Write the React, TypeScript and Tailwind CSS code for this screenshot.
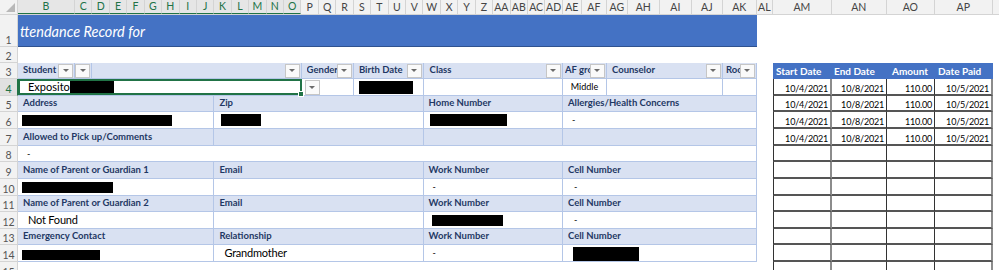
import type { ReactNode } from 'react'

const NARROW = 'w-[17.43px]'

type Col = { label: string; w: string; sel?: boolean }

const columns: Col[] = [
  { label: 'B', w: 'w-[57px]', sel: true },
  ...'C D E F G H I J K L M N O'.split(' ').map((l) => ({ label: l, w: NARROW, sel: true })),
  ...'P Q R S T U V W X Y Z AA AB AC AD'.split(' ').map((l) => ({ label: l, w: NARROW })),
  { label: 'AE', w: 'w-[19px]' },
  { label: 'AF', w: 'w-[25px]' },
  { label: 'AG', w: 'w-[21px]' },
  { label: 'AH', w: 'w-[32px]' },
  { label: 'AI', w: 'w-[32px]' },
  { label: 'AJ', w: 'w-[31px]' },
  { label: 'AK', w: 'w-[34px]' },
  { label: 'AL', w: 'w-[16px]' },
  { label: 'AM', w: 'w-[59px]' },
  { label: 'AN', w: 'w-[55px]' },
  { label: 'AO', w: 'w-[48px]' },
  { label: 'AP', w: 'w-[58px]' },
  { label: '', w: 'w-[40px]' },
]

// 4-column form rows: Address | Zip | Home Number | Allergies
const W4 = ['w-[196.4px]', 'w-[209.2px]', 'w-[139.4px]', 'w-[194px]']

const CELL = 'flex h-full shrink-0 items-center overflow-hidden whitespace-nowrap border-r border-[#b4c6e7]'
const HEAD = 'bg-[#d9e1f2] text-[9.5px] font-bold text-[#1f3864]'

// right hand payments table
const TH = ['w-[59px] pl-[3px]', 'w-[55px] pl-[2px]', 'w-[48px] pl-[5px]', 'w-[58px] pl-[3px]']
const TD = [
  'w-[59px] border-l border-l-[#333] border-r-2 border-r-[#8c8c8c]',
  'w-[55px] border-r border-r-[#333]',
  'w-[48px] border-r border-r-[#333]',
  'w-[58px] border-r-2 border-r-[#8c8c8c]',
]
const payment = ['10/4/2021', '10/8/2021', '110.00', '10/5/2021']

function Drop({ className = '' }: { className?: string }) {
  return (
    <span
      className={`flex h-[14px] w-[15px] shrink-0 items-center justify-center border border-[#c6c6c6] bg-[#fafafa] ${className}`}
    >
      <span className="h-0 w-0 border-x-[3px] border-t-[3px] border-x-transparent border-t-[#6b6b6b]" />
    </span>
  )
}

function Redact({ className }: { className: string }) {
  return <span className={`block shrink-0 bg-black ${className}`} />
}

function RowNum({ n, sel }: { n: number; sel?: boolean }) {
  return (
    <div
      className={`flex w-[18px] shrink-0 items-end justify-center border-b border-r pb-px text-[10.5px] leading-none ${
        sel
          ? 'border-[#d4d4d4] border-r-[#217346] bg-[#e1e1e1] text-[#217346]'
          : 'border-[#d4d4d4] bg-[#f2f2f2] text-[#555]'
      }`}
    >
      {n}
    </div>
  )
}

function SheetRow({
  n,
  h,
  sel,
  formClass = 'border-b border-[#b4c6e7]',
  form,
  table,
}: {
  n: number
  h: string
  sel?: boolean
  formClass?: string
  form?: ReactNode
  table?: ReactNode
}) {
  return (
    <div className={`flex ${h}`}>
      <RowNum n={n} sel={sel} />
      <div className={`flex w-[739px] shrink-0 ${formClass}`}>{form}</div>
      <div className="w-[16px] shrink-0" />
      <div className="flex w-[220px] shrink-0">{table}</div>
    </div>
  )
}

function HeadCells({ labels }: { labels: string[] }) {
  return (
    <>
      {labels.map((l, i) => (
        <div key={i} className={`${CELL} ${HEAD} ${W4[i]} pl-[5px]`}>
          {l}
        </div>
      ))}
    </>
  )
}

function TableCells({ values }: { values?: string[] }) {
  return (
    <>
      {TD.map((c, i) => (
        <div
          key={i}
          className={`flex h-full shrink-0 items-end justify-end border-b-2 border-b-[#555] pb-px pr-[2px] text-[9px] leading-none tracking-[-0.2px] text-black ${c}`}
        >
          {values?.[i]}
        </div>
      ))}
    </>
  )
}

function Dash({ className = 'pl-[9px]' }: { className?: string }) {
  return <span className={`text-[9px] text-black ${className}`}>-</span>
}

export default function App() {
  return (
    <div className="h-[270px] w-[999px] overflow-hidden bg-white font-['Lato','Liberation_Sans',sans-serif] text-black">
      {/* column letters */}
      <div className="flex h-[15px] border-b border-[#d4d4d4] bg-[#f2f2f2]">
        <div className="relative w-[18px] shrink-0 border-r border-[#d4d4d4]">
          <span className="absolute bottom-[2px] right-[2px] h-0 w-0 border-b-[9px] border-l-[9px] border-b-[#b8b8b8] border-l-transparent" />
        </div>
        {columns.map((c, i) => (
          <div
            key={i}
            className={`flex h-full shrink-0 items-center justify-center border-r border-[#d4d4d4] text-[10.5px] leading-none ${c.w} ${
              c.sel ? 'border-b border-b-[#217346] bg-[#e6e6e6] text-[#217346]' : 'text-[#444]'
            }`}
          >
            {c.label}
          </div>
        ))}
      </div>

      <SheetRow
        n={1}
        h="h-[32px]"
        formClass=""
        form={
          <div className="flex w-full items-center border-b border-[#2f528f] bg-[#4472c4] pl-[2px] pt-[3px] text-[14.5px] italic text-white">
            ttendance Record for
          </div>
        }
      />
      <SheetRow n={2} h="h-[16px]" formClass="" />

      <SheetRow
        n={3}
        h="h-[16px]"
        form={
          <>
            <div className={`${CELL} ${HEAD} w-[57px] pl-[5px] pr-px`}>
              Student
              <Drop className="ml-auto" />
            </div>
            <div className={`${CELL} ${HEAD} ${NARROW} pr-px`}>
              <span className="w-[2px] overflow-hidden">n</span>
              <Drop className="ml-auto" />
            </div>
            <div className={`${CELL} ${HEAD} w-[209.2px] pr-px`}>
              <Drop className="ml-auto" />
            </div>
            <div className={`${CELL} ${HEAD} w-[52.3px] pl-[5px] pr-px`}>
              <span className="min-w-0 flex-1 overflow-hidden">Gender</span>
              <Drop />
            </div>
            <div className={`${CELL} ${HEAD} w-[69.7px] pl-[5px] pr-px`}>
              Birth Date
              <Drop className="ml-auto" />
            </div>
            <div className={`${CELL} ${HEAD} w-[139.4px] pl-[6px] pr-px`}>
              Class
              <Drop className="ml-auto" />
            </div>
            <div className={`${CELL} ${HEAD} w-[44px] pl-[2px] pr-px`}>
              <span className="min-w-0 flex-1 overflow-hidden">AF group</span>
              <Drop />
            </div>
            <div className={`${CELL} ${HEAD} w-[116px] pl-[5px] pr-px`}>
              Counselor
              <Drop className="ml-auto" />
            </div>
            <div className={`${CELL} ${HEAD} w-[34px] pl-[3px] pr-px`}>
              <span className="min-w-0 flex-1 overflow-hidden">Room</span>
              <Drop />
            </div>
          </>
        }
        table={
          <div className="flex h-full w-full bg-[#4472c4] text-[10px] font-bold text-white">
            {['Start Date', 'End Date', 'Amount', 'Date Paid'].map((t, i) => (
              <div key={t} className={`flex h-full shrink-0 items-center whitespace-nowrap ${TH[i]}`}>
                {t}
              </div>
            ))}
          </div>
        }
      />

      <SheetRow
        n={4}
        h="h-[17px]"
        sel
        form={
          <>
            <div className="relative flex h-full w-[283.6px] shrink-0 items-center border-2 border-[#217346] pl-[8px] text-[11px]">
              Exposito
              <Redact className="h-[12px] w-[44px]" />
              <span className="absolute -bottom-[4px] -right-[4px] h-[6px] w-[6px] border border-white bg-[#217346]" />
            </div>
            <div className={`${CELL} w-[52.3px] pl-[3px]`}>
              <Drop className="h-[15px]" />
            </div>
            <div className={`${CELL} w-[69.7px] pl-[5px]`}>
              <Redact className="h-[13px] w-[54px]" />
            </div>
            <div className={`${CELL} w-[139.4px]`} />
            <div className={`${CELL} w-[44px] justify-center text-[9px]`}>Middle</div>
            <div className={`${CELL} w-[116px]`} />
            <div className={`${CELL} w-[34px]`} />
          </>
        }
        table={<TableCells values={payment} />}
      />

      <SheetRow
        n={5}
        h="h-[16px]"
        form={<HeadCells labels={['Address', 'Zip', 'Home Number', 'Allergies/Health Concerns']} />}
        table={<TableCells values={payment} />}
      />
      <SheetRow
        n={6}
        h="h-[17px]"
        form={
          <>
            <div className={`${CELL} ${W4[0]} pl-[4px]`}>
              <Redact className="h-[11px] w-[150px]" />
            </div>
            <div className={`${CELL} ${W4[1]} pl-[7px]`}>
              <Redact className="h-[12px] w-[40px]" />
            </div>
            <div className={`${CELL} ${W4[2]} pl-[6px]`}>
              <Redact className="h-[12px] w-[77px]" />
            </div>
            <div className={`${CELL} ${W4[3]}`}>
              <Dash />
            </div>
          </>
        }
        table={<TableCells values={payment} />}
      />
      <SheetRow
        n={7}
        h="h-[17px]"
        form={<HeadCells labels={['Allowed to Pick up/Comments', '', '', '']} />}
        table={<TableCells values={payment} />}
      />
      <SheetRow
        n={8}
        h="h-[16px]"
        form={
          <div className={`${CELL} w-[739px]`}>
            <Dash />
          </div>
        }
        table={<TableCells />}
      />
      <SheetRow
        n={9}
        h="h-[17px]"
        form={<HeadCells labels={['Name of Parent or Guardian 1', 'Email', 'Work Number', 'Cell Number']} />}
        table={<TableCells />}
      />
      <SheetRow
        n={10}
        h="h-[17px]"
        form={
          <>
            <div className={`${CELL} ${W4[0]} pl-[4px]`}>
              <Redact className="h-[11px] w-[91px]" />
            </div>
            <div className={`${CELL} ${W4[1]}`} />
            <div className={`${CELL} ${W4[2]}`}>
              <Dash />
            </div>
            <div className={`${CELL} ${W4[3]}`}>
              <Dash className="pl-[11px]" />
            </div>
          </>
        }
        table={<TableCells />}
      />
      <SheetRow
        n={11}
        h="h-[16px]"
        form={<HeadCells labels={['Name of Parent or Guardian 2', 'Email', 'Work Number', 'Cell Number']} />}
        table={<TableCells />}
      />
      <SheetRow
        n={12}
        h="h-[17px]"
        form={
          <>
            <div className={`${CELL} ${W4[0]} pl-[10px] text-[11px] tracking-[-0.2px]`}>Not Found</div>
            <div className={`${CELL} ${W4[1]}`} />
            <div className={`${CELL} ${W4[2]} pl-[8px]`}>
              <Redact className="h-[11px] w-[71px]" />
            </div>
            <div className={`${CELL} ${W4[3]}`}>
              <Dash className="pl-[11px]" />
            </div>
          </>
        }
        table={<TableCells />}
      />
      <SheetRow
        n={13}
        h="h-[16px]"
        form={<HeadCells labels={['Emergency Contact', 'Relationship', 'Work Number', 'Cell Number']} />}
        table={<TableCells />}
      />
      <SheetRow
        n={14}
        h="h-[17px]"
        form={
          <>
            <div className={`${CELL} ${W4[0]} items-end pb-px pl-[4px]`}>
              <Redact className="h-[10px] w-[78px]" />
            </div>
            <div className={`${CELL} ${W4[1]} pl-[10px] text-[11px] tracking-[-0.2px]`}>Grandmother</div>
            <div className={`${CELL} ${W4[2]}`}>
              <Dash />
            </div>
            <div className={`${CELL} ${W4[3]} items-end pl-[10px]`}>
              <Redact className="h-[14px] w-[66px]" />
            </div>
          </>
        }
        table={<TableCells />}
      />
      <SheetRow n={15} h="h-[17px]" formClass="" table={<TableCells />} />
    </div>
  )
}
